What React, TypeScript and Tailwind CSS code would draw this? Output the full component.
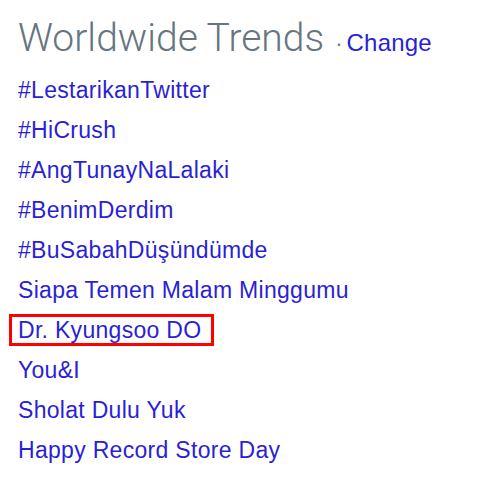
const trends = [
  "#LestarikanTwitter",
  "#HiCrush",
  "#AngTunayNaLalaki",
  "#BenimDerdim",
  "#BuSabahDüşündümde",
  "Siapa Temen Malam Minggumu",
  "Dr. Kyungsoo DO",
  "You&I",
  "Sholat Dulu Yuk",
  "Happy Record Store Day",
];

export default function App() {
  return (
    <div className="h-[484px] w-[483px] bg-white pl-[18px] pt-[15px] font-['Liberation_Sans',Arial,sans-serif]">
      <div className="flex items-baseline">
        <h1 className="font-['Roboto',sans-serif] text-[39px] font-light leading-[46px] text-[#66757f]">
          Worldwide Trends
        </h1>
        <span className="ml-[11px] text-[22px] text-[#66757f]">·</span>
        <a className="ml-[4px] text-[24px] tracking-[0.2px] text-[#2a1fd6]">Change</a>
      </div>
      <ul className="mt-[9px] flex flex-col text-[23px] tracking-[0.3px] text-[#2a1fd6]">
        {trends.map((t) =>
          t === "Dr. Kyungsoo DO" ? (
            <li key={t} className="flex h-10 items-center">
              <span className="-ml-[9px] flex h-8 items-center border-[3px] border-[#ff0000] pl-[6px] pr-[10px]">
                {t}
              </span>
            </li>
          ) : (
            <li key={t} className="h-10 leading-10">
              {t}
            </li>
          )
        )}
      </ul>
    </div>
  );
}
